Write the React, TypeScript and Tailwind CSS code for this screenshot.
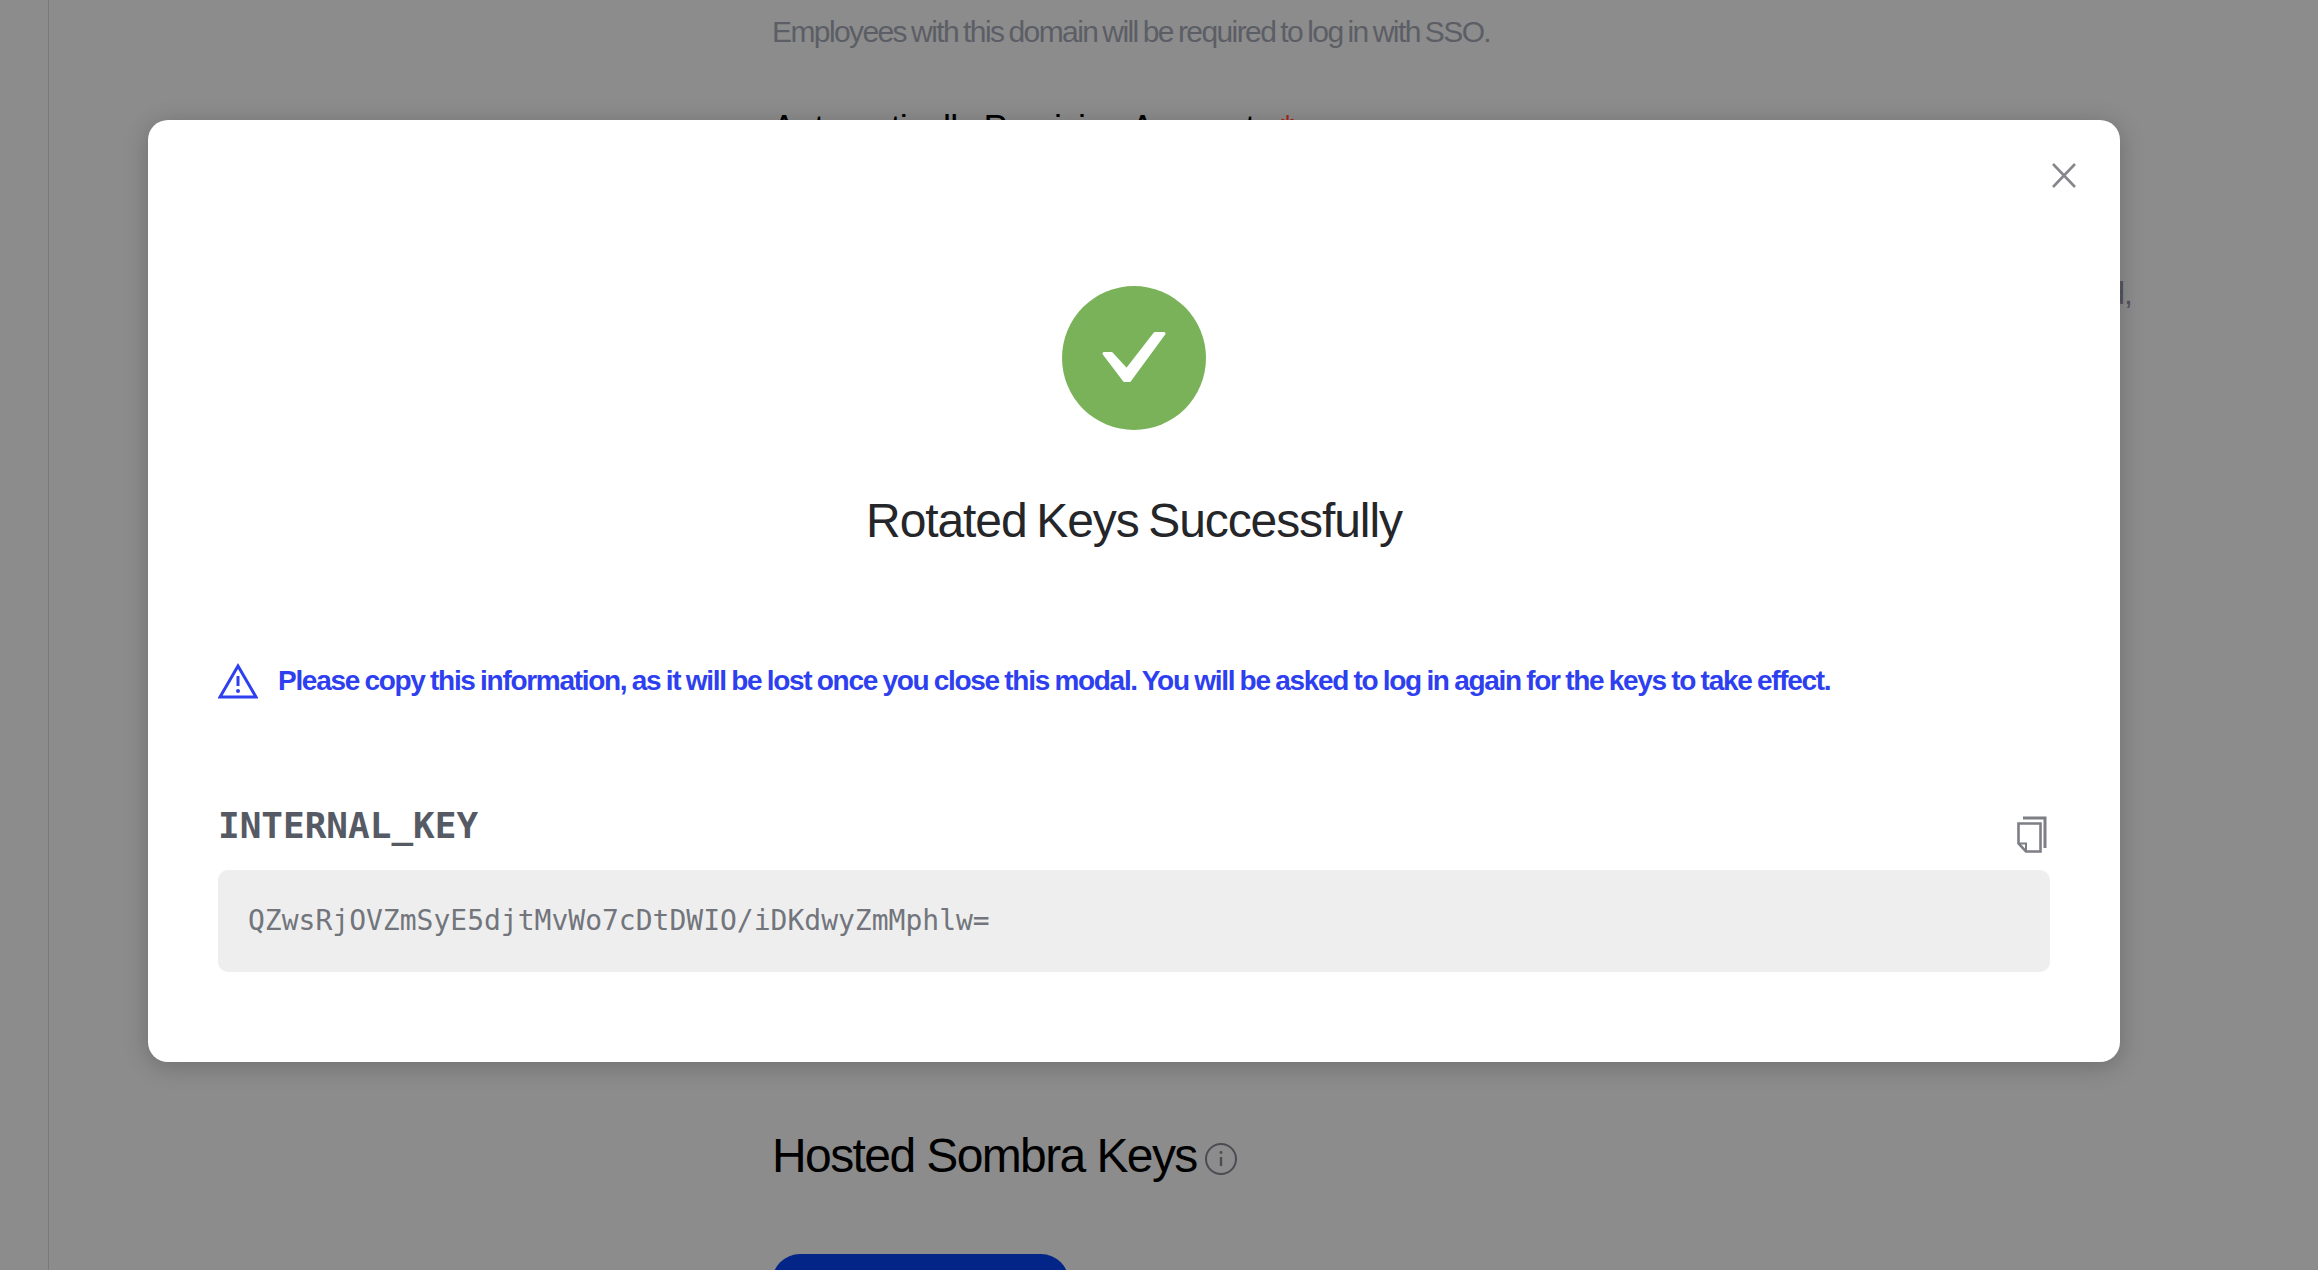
export default function App() {
  return (
    <div className="relative h-[1270px] w-[2318px] overflow-hidden bg-[#8c8c8c] font-['Liberation_Sans',sans-serif]">
      <div className="ml-[48px] h-full border-l border-[#7a7a7a] pl-[723px]">
        <p className="pt-[12px] text-[30px] leading-[40px] tracking-[-1.6px] text-[#5c5e66] [word-spacing:-1.65px]">
          Employees with this domain will be required to log in with SSO.
        </p>
        <h3 className="mt-[57px] text-[36px] leading-[40px] tracking-[-0.025em] text-black">
          Automatically Provision Accounts <span className="text-[#a3281c]">*</span>
        </h3>
        <p className="mt-[124px] w-[1360px] text-right text-[32px] leading-[40px] tracking-[-1px] text-[#55565c]">d,</p>
        <div className="mt-[815px] flex items-center gap-[8px]">
          <h2 className="text-[48px] leading-[56px] tracking-[-1.6px] text-black">Hosted Sombra Keys</h2>
          <svg className="mt-[6px] h-[32px] w-[32px]" viewBox="0 0 32 32" fill="none" stroke="#4a4c52" strokeWidth="2">
            <circle cx="16" cy="16" r="15" />
            <path d="M16 14v9" strokeWidth="2.4" />
            <circle cx="16" cy="9.5" r="1.4" fill="#4a4c52" stroke="none" />
          </svg>
        </div>
        <div className="mt-[70px] h-[80px] w-[297px] rounded-[28px] bg-[#032587]" />
      </div>

      <div className="absolute left-[148px] top-[120px] flex h-[942px] w-[1972px] flex-col rounded-[20px] bg-white px-[70px] pt-[166px] shadow-[0_4px_24px_rgba(0,0,0,0.22)]">
        <button className="absolute left-[1904px] top-[43px] h-[25px] w-[24px]" aria-label="Close">
          <svg viewBox="0 0 24 25" className="h-full w-full" fill="none" stroke="#85878c" strokeWidth="2.6">
            <path d="M1 1l22 23M23 1L1 24" />
          </svg>
        </button>

        <svg className="mx-auto h-[144px] w-[144px] shrink-0" viewBox="0 0 144 144">
          <circle cx="72" cy="72" r="72" fill="#7ab259" />
          <path
            d="M42 67.5H49.5L64.7 84L93 47.5H102L67.5 94.5H62.5Z"
            fill="#fff"
            stroke="#fff"
            strokeWidth="3"
            strokeLinejoin="round"
          />
        </svg>

        <h1 className="mt-[63px] text-center text-[48px] leading-[56px] tracking-[-1.1px] text-[#25262a] [word-spacing:-2.5px]">
          Rotated Keys Successfully
        </h1>

        <div className="mt-[114px] flex items-center gap-[20px]">
          <svg className="h-[36px] w-[40px] shrink-0" viewBox="0 0 40 36" fill="none" stroke="#2e3ff0" strokeWidth="3" strokeLinejoin="miter">
            <path d="M20 3L38 34H2Z" />
            <path d="M20 13v10" strokeWidth="3" />
            <circle cx="20" cy="28" r="2" fill="#2e3ff0" stroke="none" />
          </svg>
          <p className="whitespace-nowrap text-[28px] font-bold leading-[36px] tracking-[-1.3px] text-[#2e3ff0] [word-spacing:-1px]">
            Please copy this information, as it will be lost once you close this modal. You will be asked to log in again for the keys to take effect.
          </p>
        </div>

        <div className="mt-[105px] flex items-end justify-between pr-[2px]">
          <h4 className="font-['DejaVu_Sans_Mono',monospace] text-[36px] font-bold leading-[44px] text-[#555a65]">
            INTERNAL_KEY
          </h4>
          <svg className="mb-[-5px] h-[38px] w-[32px]" viewBox="0 0 32 38" fill="none" stroke="#7d7f85" strokeWidth="3">
            <path d="M7 3H29V33" />
            <path d="M2.5 8.5H24.5V36.5H10L2.5 28.5Z" strokeWidth="2.6" />
            <path d="M2.5 28.5H10V36.5" strokeWidth="2" />
          </svg>
        </div>

        <div className="mt-[22px] flex h-[102px] items-center rounded-[10px] bg-[#eeeeee] px-[30px] font-['DejaVu_Sans_Mono',monospace] text-[28px] text-[#72757c]">
          QZwsRjOVZmSyE5djtMvWo7cDtDWIO/iDKdwyZmMphlw=
        </div>
      </div>
    </div>
  );
}
